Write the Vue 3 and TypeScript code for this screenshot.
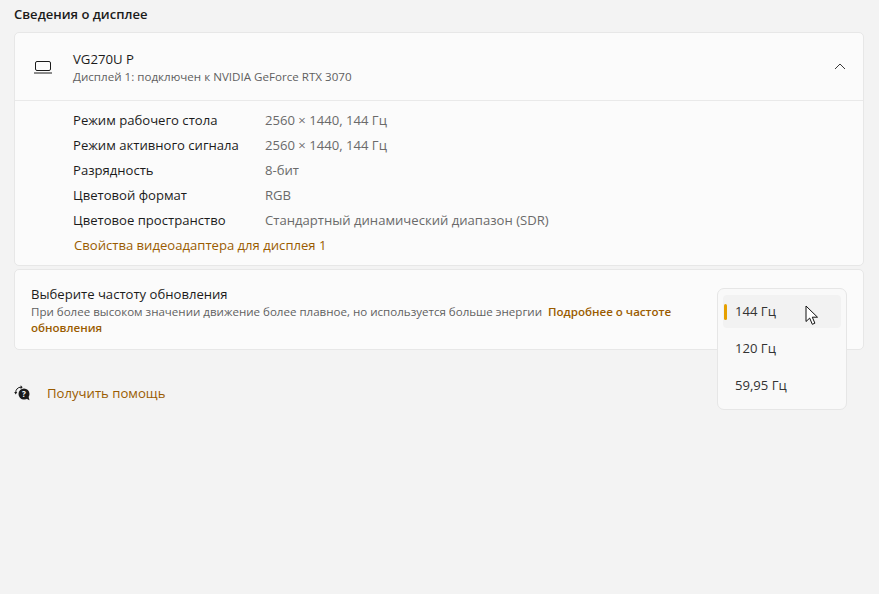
<script setup lang="ts">
const rows = [
  { label: 'Режим рабочего стола', value: '2560 × 1440, 144 Гц' },
  { label: 'Режим активного сигнала', value: '2560 × 1440, 144 Гц' },
  { label: 'Разрядность', value: '8-бит' },
  { label: 'Цветовой формат', value: 'RGB' },
  { label: 'Цветовое пространство', value: 'Стандартный динамический диапазон (SDR)' },
];
const rates = ['144 Гц', '120 Гц', '59,95 Гц'];
</script>

<template>
  <div class="page">
    <h2 class="heading">Сведения о дисплее</h2>

    <section class="card">
      <header class="monitor">
        <svg class="laptop" width="20" height="14" viewBox="0 0 20 14" fill="none" stroke="#1b1b1b" stroke-width="1">
          <rect x="2.5" y="1.5" width="15" height="9" rx="1.5" />
          <path d="M1 13h18" />
        </svg>
        <div class="monitor-text">
          <div class="monitor-name">VG270U P</div>
          <div class="monitor-sub">Дисплей 1: подключен к NVIDIA GeForce RTX 3070</div>
        </div>
        <svg class="chevron" width="12" height="7" viewBox="0 0 12 7" fill="none" stroke="#3a3a3a" stroke-width="1">
          <path d="M1 6l5-5 5 5" />
        </svg>
      </header>
      <div class="details">
        <div v-for="row in rows" :key="row.label" class="row">
          <span class="row-label">{{ row.label }}</span>
          <span class="row-value">{{ row.value }}</span>
        </div>
        <a class="adapter-link">Свойства видеоадаптера для дисплея 1</a>
      </div>
    </section>

    <section class="card rate">
      <div class="rate-title">Выберите частоту обновления</div>
      <p class="rate-desc">
        При более высоком значении движение более плавное, но используется больше энергии
        <a class="rate-link">Подробнее о частоте обновления</a>
      </p>

      <div class="menu">
        <div v-for="(rate, i) in rates" :key="rate" class="menu-item" :class="{ active: i === 0 }">{{ rate }}</div>
      </div>
      <svg class="cursor" width="15" height="21" viewBox="0 0 15 21">
        <path d="M1 1v15.5l3.7-3.4 2.6 6.2 2.6-1.1-2.6-6h5.2z" fill="#fff" stroke="#111" stroke-width="1" stroke-linejoin="round" />
      </svg>
    </section>

    <div class="help">
      <svg width="18" height="18" viewBox="0 0 18 18">
        <path d="M1.8 8.8A5 5 0 0 1 7 3.2" fill="none" stroke="#1a1a1a" stroke-width="1" />
        <path d="M6.6 1.2v4l2-2z" fill="#1a1a1a" />
        <path d="M.2 8h3l-1.5 2.4z" fill="#1a1a1a" />
        <circle cx="10" cy="10" r="5.5" fill="#1a1a1a" />
        <path d="M12 14.5l3.5 1.8-1-3.5z" fill="#1a1a1a" />
        <text x="10" y="12.9" class="help-mark">?</text>
      </svg>
      <a class="help-link">Получить помощь</a>
    </div>
  </div>
</template>

<style>
html, body {
  margin: 0;
  background: #f3f3f3;
}
</style>

<style scoped>
.page {
  height: 594px;
  padding: 5px 15px 0 14px;
  box-sizing: border-box;
  font-family: "Open Sans", "Noto Sans", sans-serif;
  font-size: 13px;
  color: #1b1b1b;
  background: #f3f3f3;
  overflow: hidden;
}

.heading {
  margin: 0 0 9px;
  font-size: 13.05px;
  line-height: 18px;
  font-weight: 600;
}

.card {
  background: #fbfbfb;
  border: 1px solid #e7e7e7;
  border-radius: 5px;
}

.monitor {
  display: flex;
  align-items: center;
  height: 68px;
  padding: 0 17px 0 18px;
  border-bottom: 1px solid #e9e9e9;
  box-sizing: border-box;
}

.laptop {
  margin-right: 20px;
}

.monitor-text {
  flex: 1;
}

.monitor-name {
  font-size: 13.2px;
  line-height: 18px;
}

.monitor-sub {
  font-size: 11.6px;
  line-height: 15px;
  margin-top: 1px;
  color: #5f5f5f;
}

.details {
  padding: 7px 0 0 58px;
  height: 164px;
  box-sizing: border-box;
}

.row {
  display: flex;
  height: 25px;
  line-height: 25px;
  font-size: 13.1px;
}

.row-label {
  width: 192px;
}

.row-value {
  color: #6a6a6a;
}

.adapter-link {
  display: block;
  margin-left: 1px;
  line-height: 25px;
  font-size: 13.1px;
  color: #9a5b00;
}

.rate {
  position: relative;
  height: 81px;
  margin-top: 3px;
  padding: 15px 16px 0;
  box-sizing: border-box;
}

.rate-title {
  font-size: 13.1px;
  line-height: 18px;
  margin-bottom: 1px;
}

.rate-desc {
  width: 650px;
  margin: 0;
  font-size: 11.55px;
  line-height: 16px;
  color: #5f5f5f;
}

.rate-link {
  margin-left: 3px;
  font-weight: 600;
  color: #9a5b00;
}

.menu {
  position: absolute;
  left: 702px;
  top: 18px;
  width: 130px;
  height: 122px;
  box-sizing: border-box;
  padding: 6px 5px;
  background: #f9f9f9;
  border: 1px solid #e6e6e6;
  border-radius: 7px;
}

.menu-item {
  position: relative;
  height: 33px;
  line-height: 33px;
  margin-bottom: 4px;
  padding-left: 12px;
  font-size: 13.1px;
  border-radius: 4px;
  color: #333;
}

.menu-item.active {
  background: #f2f2f2;
}

.menu-item.active::before {
  content: "";
  position: absolute;
  left: 1px;
  top: 9px;
  width: 3px;
  height: 16px;
  border-radius: 2px;
  background: #e6a000;
}

.cursor {
  position: absolute;
  left: 790px;
  top: 35px;
}

.help {
  display: flex;
  align-items: center;
  gap: 15px;
  margin-top: 34px;
  height: 18px;
}

.help-mark {
  font-size: 8px;
  font-weight: 700;
  fill: #fff;
  text-anchor: middle;
}

.help-link {
  font-size: 13.15px;
  color: #9a5b00;
}
</style>
